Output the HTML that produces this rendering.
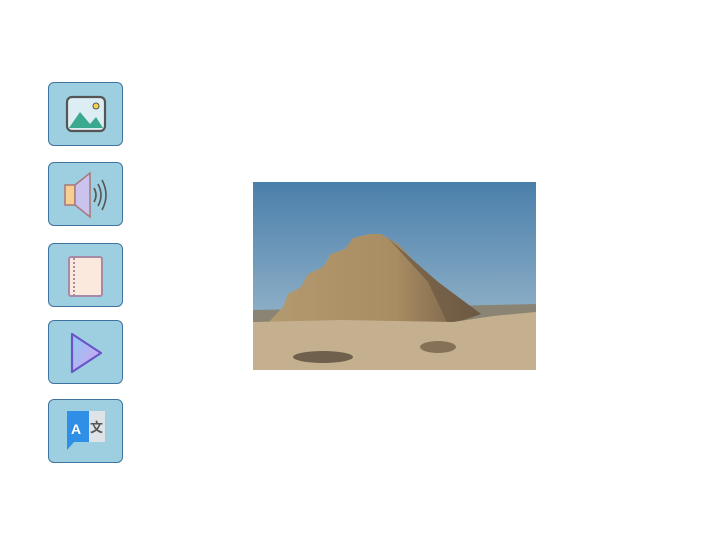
<html><head><style>
body{margin:0;width:720px;height:540px;background:#fff;position:relative;overflow:hidden;font-family:"Liberation Sans",sans-serif}
.b{position:absolute;left:48px;width:75px;height:64px;background:#9dcfe0;border:1px solid #3f74a0;border-radius:6px;box-sizing:border-box}
.b svg{position:absolute;left:0;top:0}
</style></head><body>
<div class="b" style="top:82px"><svg width="75" height="64"><rect x="18" y="14" width="38" height="34" rx="5" fill="#dceef3" stroke="#555" stroke-width="2.2"/><path d="M20 45 L31 29 L41 41 L47 34 L54 45Z" fill="#3aa98d"/><circle cx="47" cy="23" r="3" fill="#f5d54a" stroke="#555"/></svg></div>
<div class="b" style="top:162px"><svg width="75" height="64"><rect x="16" y="22" width="10" height="20" fill="#f7cf91" stroke="#a77" stroke-width="1.5"/><path d="M26 22 L41 10 L41 54 L26 42Z" fill="#c9c3ee" stroke="#a77" stroke-width="1.5"/><path d="M45 25 Q49 32 45 39 M49 21 Q55 32 49 43 M53 17 Q61 32 53 47" fill="none" stroke="#555" stroke-width="1.6"/></svg></div>
<div class="b" style="top:243px"><svg width="75" height="64"><rect x="20" y="13" width="33" height="39" rx="2" fill="#fbe9dd" stroke="#a68aa8" stroke-width="2"/><line x1="25" y1="14" x2="25" y2="51" stroke="#a68aa8" stroke-width="2" stroke-dasharray="2 2"/></svg></div>
<div class="b" style="top:320px"><svg width="75" height="64"><defs><linearGradient id="g" x1="0" y1="0" x2="1" y2="1"><stop offset="0" stop-color="#8cc9f2"/><stop offset="1" stop-color="#d7a0f0"/></linearGradient></defs><path d="M23 13 L52 32 L23 51Z" fill="url(#g)" stroke="#6a55c8" stroke-width="2.2" stroke-linejoin="round"/></svg></div>
<div class="b" style="top:399px"><svg width="75" height="64"><path d="M18 11 L40 11 L40 42 L25 42 L18 50Z" fill="#2f8ee6"/><rect x="40" y="11" width="16" height="31" fill="#dde3e6"/><text x="22" y="34" font-size="14" font-weight="bold" fill="#fff" font-family="Liberation Sans">A</text><text x="41" y="32" font-size="13" font-weight="bold" fill="#555" font-family="Noto Sans CJK SC,sans-serif">文</text></svg></div>
<svg style="position:absolute;left:253px;top:182px" width="283" height="188">
<defs><linearGradient id="s" x1="0" y1="0" x2="0" y2="1"><stop offset="0" stop-color="#4a7fab"/><stop offset="1" stop-color="#a9c3d2"/></linearGradient><linearGradient id="p" x1="0" y1="0" x2="1" y2="0"><stop offset="0" stop-color="#b49a70"/><stop offset="0.6" stop-color="#a88c62"/><stop offset="1" stop-color="#6f5b44"/></linearGradient></defs>
<rect width="283" height="188" fill="url(#s)"/>
<path d="M0 128 L283 122 L283 188 L0 188Z" fill="#8a8474"/>
<path d="M14 142 L30 125 L35 112 L48 105 L55 92 L70 85 L78 72 L92 67 L100 56 L116 52 L128 52 L145 62 L160 78 L185 100 L228 132 L200 142Z" fill="url(#p)"/>
<path d="M135 56 L160 78 L185 100 L228 132 L195 142 L175 100Z" fill="#6c5843" opacity="0.7"/>
<path d="M0 140 L90 138 L200 140 L240 134 L283 130 L283 188 L0 188Z" fill="#c4b08e"/>
<ellipse cx="70" cy="175" rx="30" ry="6" fill="#6e604c"/><ellipse cx="185" cy="165" rx="18" ry="6" fill="#857158"/>
</svg>
</body></html>
